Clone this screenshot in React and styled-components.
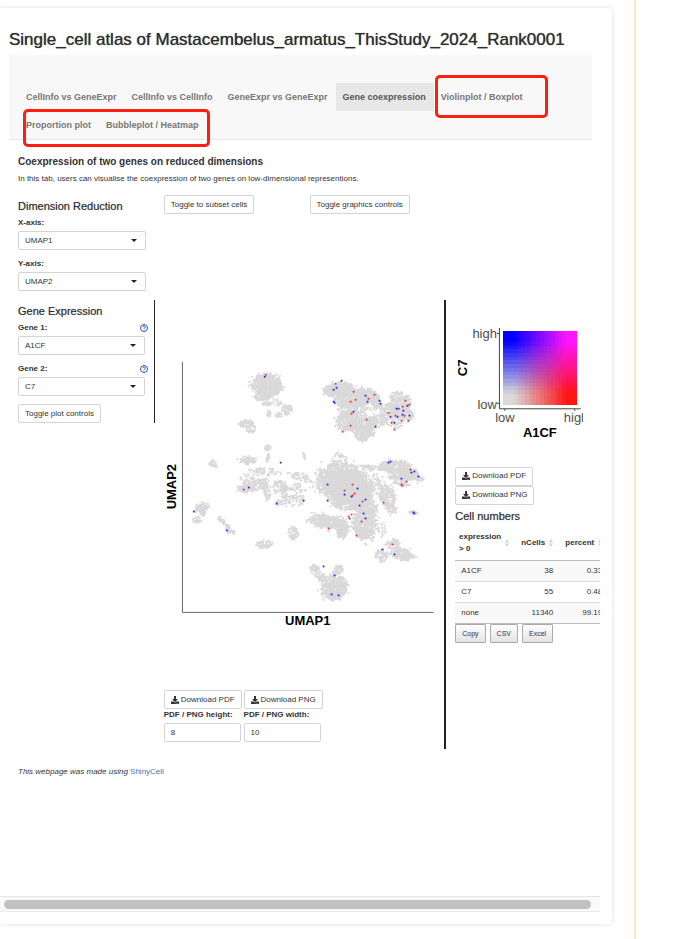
import React from 'react';
import styled, { createGlobalStyle } from "styled-components";
import { FaDownload } from "react-icons/fa";

const tabs = [
    "CellInfo vs GeneExpr",
    "CellInfo vs CellInfo",
    "GeneExpr vs GeneExpr",
    "Gene coexpression",
    "Violinplot / Boxplot",
    "Proportion plot",
    "Bubbleplot / Heatmap",
];

const cellNumbers = [
    { name: "A1CF", nCells: "38", percent: "0.33" },
    { name: "C7", nCells: "55", percent: "0.48" },
    { name: "none", nCells: "11340", percent: "99.19" },
];

// cx, cy, rx, ry, rotation (degrees), density
const clusters = [
    [266, 385, 14, 11, 0, 1.1], [270, 387, 12, 10, 0, 0.8], [262, 397, 8, 4, 0, 0.8], [267, 404, 5, 2, 0, 0.8],
    [287, 410, 6, 5, 20, 0.7], [269, 413, 2, 4, 0, 0.6], [279, 415, 4, 3, 0, 0.5], [277, 403, 5, 3, 0, 0.3],
    [246, 424, 7, 4, 0, 0.8], [251, 429, 5, 4, 0, 0.6], [213, 464, 4, 3, 45, 0.8],
    [268, 448, 3, 3, 0, 0.9], [248, 461, 8, 4, 0, 0.8], [268, 459, 2, 5, 0, 0.5], [265, 472, 15, 4, 0, 0.4],
    [248, 480, 8, 6, 0, 0.3], [247, 489, 9, 4, 0, 0.8], [260, 484, 9, 5, -20, 0.7], [267, 491, 3, 9, -15, 0.8],
    [280, 487, 8, 6, 0, 0.6], [285, 495, 3, 9, 0, 0.6], [280, 503, 4, 3, 0, 0.6],
    [202, 508, 8, 4, -25, 1], [197, 520, 4, 3, -20, 0.8], [203, 513, 3, 3, 0, 0.7],
    [222, 521, 6, 2, 45, 0.8], [228, 529, 2, 5, -10, 0.8], [233, 532, 3, 2, 0, 0.6],
    [264, 545, 8, 4, 0, 0.7], [294, 534, 5, 6, 0, 0.7], [297, 500, 9, 6, 0, 0.4], [305, 457, 1, 5, -20, 0.6],
    [300, 477, 12, 4, 20, 0.4], [298, 489, 8, 5, 0, 0.3],
    // centre
    [340, 472, 20, 9, 0, 0.6], [340, 460, 7, 7, 0, 0.3], [332, 484, 17, 12, 0, 0.9], [348, 487, 22, 17, 0, 1.2],
    [360, 492, 14, 14, 0, 1], [348, 502, 15, 8, 0, 0.8], [327, 522, 18, 7, 8, 0.7], [330, 523, 12, 5, 0, 0.7],
    [343, 529, 6, 10, 0, 0.9], [365, 523, 11, 17, 0, 1.2], [365, 508, 13, 5, 0, 0.6], [382, 530, 4, 6, 0, 0.2],
    [388, 497, 8, 11, -20, 0.7], [392, 509, 5, 5, 0, 0.7], [414, 513, 4, 2, 0, 0.8], [378, 482, 8, 8, 0, 0.2],
    // right wing
    [395, 467, 16, 6, 0, 1.2], [372, 468, 11, 2, 8, 0.8], [410, 474, 10, 6, 25, 1.1], [400, 478, 11, 6, 0, 0.7],
    [419, 478, 5, 4, 0, 0.7], [405, 485, 6, 2, 0, 0.5],
    [393, 545, 6, 5, 0, 0.8], [382, 556, 6, 6, 0, 0.8], [402, 555, 10, 6, 10, 1.1], [411, 557, 5, 2, 0, 0.7],
    // bottom
    [315, 570, 5, 4, 0, 0.8], [321, 577, 6, 4, 40, 0.8], [337, 572, 8, 4, -35, 0.8], [335, 588, 13, 11, 0, 1.2],
    [335, 598, 8, 3, 0, 0.5],
    // upper right
    [341, 388, 13, 6, 0, 1], [330, 391, 6, 5, 0, 1], [349, 396, 19, 8, 10, 1.1], [350, 404, 15, 4, 0, 0.7],
    [368, 397, 12, 8, 20, 0.9], [377, 404, 6, 5, 40, 0.7], [349, 421, 12, 10, 0, 1], [362, 424, 14, 9, 0, 1],
    [364, 433, 10, 6, 0, 0.9], [363, 439, 5, 3, 0, 0.8], [378, 421, 10, 6, 0, 0.8], [390, 412, 8, 9, 0, 0.7],
    [398, 397, 7, 5, 0, 0.7], [407, 402, 4, 7, 0, 0.8], [399, 406, 11, 7, 0, 0.7], [404, 415, 10, 6, 0, 1],
    [395, 425, 7, 4, 0, 0.4], [355, 410, 16, 4, 0, 0.6],
];

const bluePoints = [
    [265, 377], [281, 463], [249, 488], [194, 512], [227, 531], [277, 504], [342, 381], [334, 390], [337, 388],
    [334, 402], [335, 403], [366, 396], [368, 402], [380, 401], [381, 404], [354, 412], [376, 427], [391, 417],
    [397, 409], [399, 409], [408, 406], [404, 411], [403, 415], [398, 417], [410, 416], [395, 423], [389, 463],
    [391, 462], [412, 473], [415, 472], [419, 477], [402, 479], [328, 485], [358, 489], [345, 495], [352, 497],
    [328, 501], [304, 501], [366, 500], [360, 506], [350, 519], [364, 514], [366, 519], [414, 513], [415, 514],
    [383, 550], [395, 555], [324, 567], [335, 576], [332, 595], [339, 596],
];

const redPoints = [
    [266, 375], [244, 490], [336, 384], [354, 392], [356, 400], [351, 402], [369, 399], [375, 395], [352, 414],
    [367, 420], [351, 426], [343, 432], [389, 413], [403, 407], [406, 401], [410, 405], [405, 416], [396, 416],
    [402, 421], [409, 421], [392, 423], [395, 430], [411, 470], [407, 482], [402, 485], [403, 486], [353, 485],
    [345, 491], [355, 494], [353, 496], [363, 502], [352, 515], [349, 517], [362, 522], [329, 529], [357, 536],
    [384, 503], [393, 545],
];

function makeRandom(seed) {
    let s = seed;
    return () => {
        s = (s * 16807) % 2147483647;
        return s / 2147483647;
    };
}

function scatterPath() {
    const random = makeRandom(2024);
    const seen = new Set();
    clusters.forEach(([cx, cy, rx, ry, rotation, density]) => {
        const count = Math.round(Math.PI * rx * ry * density * 0.85) + 6;
        const angle = (rotation * Math.PI) / 180;
        for (let i = 0; i < count; i++) {
            const t = random() * Math.PI * 2;
            // a few cells stray well outside their cluster
            const stray = random() < 0.08 ? 1.3 : 1;
            const r = Math.sqrt(random()) * (0.9 + random() * 0.25) * stray;
            const dx = Math.cos(t) * r * rx;
            const dy = Math.sin(t) * r * ry;
            const x = cx + dx * Math.cos(angle) - dy * Math.sin(angle);
            const y = cy + dx * Math.sin(angle) + dy * Math.cos(angle);
            seen.add(`M${(x - 0.9).toFixed(1)} ${(y - 0.9).toFixed(1)}h1.8v1.8h-1.8z`);
        }
    });
    return [...seen].join("");
}

const greyCells = scatterPath();

const STEPS = 20;

function blend(i, j) {
    const u = Math.min(1, Math.max(0, (i / (STEPS - 1) - 0.12) / 0.76));
    const v = Math.min(1, Math.max(0, (j / (STEPS - 1) - 0.12) / 0.76));
    const corners = [[217, 217, 217], [255, 20, 20], [0, 0, 255], [255, 20, 255]];
    const weights = [(1 - u) * (1 - v), u * (1 - v), (1 - u) * v, u * v];
    const mix = [0, 1, 2].map((c) => Math.round(corners.reduce((sum, k, n) => sum + k[c] * weights[n], 0)));
    return `rgb(${mix.join(",")})`;
}

function UmapPlot() {
    return (
        <Plot viewBox="164 300 272 391" role="img" aria-label="UMAP1 UMAP2">
            <path d={greyCells} fill="#d9d9d9" />
            {redPoints.map(([x, y], i) => (
                <rect key={i} x={x - 1} y={y - 1} width="1.8" height="1.8" fill="#f03030" />
            ))}
            {bluePoints.map(([x, y], i) => (
                <rect key={i} x={x - 1} y={y - 1} width="1.8" height="1.8" fill="#2626f0" />
            ))}
            <path d="M182.5 362V613H434" fill="none" stroke="#666" />
            <AxisTitle x="308" y="626">UMAP1</AxisTitle>
            <AxisTitle transform="translate(176 487) rotate(-90)">UMAP2</AxisTitle>
        </Plot>
    )
}

function Legend() {
    const cells = [];
    const size = 74 / STEPS;
    for (let i = 0; i < STEPS; i++) {
        for (let j = 0; j < STEPS; j++) {
            cells.push(
                <rect key={`${i}-${j}`} x={503 + i * size} y={405 - (j + 1) * size} width={size} height={size} fill={blend(i, j)} />
            );
        }
    }
    return (
        <Plot viewBox="455 300 128 167" role="img" aria-label="A1CF C7">
            <g shapeRendering="crispEdges">{cells}</g>
            <path d="M499.5 328V409H581M497 333.5H499.5M497 403.5H499.5M505 409V411M575 409V411" fill="none" stroke="#444" />
            <TickText x="497" y="338" textAnchor="end">high</TickText>
            <TickText x="497" y="409" textAnchor="end">low</TickText>
            <TickText x="505" y="422" textAnchor="middle">low</TickText>
            <TickText x="564" y="422">high</TickText>
            <AxisTitle x="540" y="437">A1CF</AxisTitle>
            <AxisTitle transform="translate(467 368) rotate(-90)">C7</AxisTitle>
        </Plot>
    )
}

function SelectField({ id, label, value, help }) {
    return (
        <Field>
            <FieldHead>
                <Label htmlFor={id}>{label}</Label>
                {help && (
                    <HelpIcon viewBox="0 0 16 16" aria-hidden="true">
                        <circle cx="8" cy="8" r="7" />
                        <path d="M5.6 6.2a2.4 2.2 0 1 1 3.6 1.9Q8 8.8 8 9.8M8 11v1.6" />
                    </HelpIcon>
                )}
            </FieldHead>
            <SelectBox>
                <Select id={id} defaultValue={value}>
                    <option>{value}</option>
                </Select>
                <Caret viewBox="0 0 6 3" aria-hidden="true"><path d="M0 0H6L3 3Z" /></Caret>
            </SelectBox>
        </Field>
    )
}

function DownloadButton({ children }) {
    return <Button type="button"><FaDownload size={8} />{children}</Button>
}

function App() {
    return (
        <Page>
            <GlobalStyle />
            <Card>
                <Pane>
                    <Content>
                        <Title>Single_cell atlas of Mastacembelus_armatus_ThisStudy_2024_Rank0001</Title>
                        <Navbar>
                            {tabs.map((tab) => (
                                <Tab key={tab} href="#" $active={tab === "Gene coexpression"}>{tab}</Tab>
                            ))}
                            <Marker $left={426} $top={20} $width={113} $height={43} />
                            <Marker $left={14} $top={54} $width={187} $height={38} />
                        </Navbar>
                        <Intro>
                            <Heading>Coexpression of two genes on reduced dimensions</Heading>
                            <p>In this tab, users can visualise the coexpression of two genes on low-dimensional representions.</p>
                        </Intro>
                        <Row>
                            <Column>
                                <SectionTitle>Dimension Reduction</SectionTitle>
                                <SelectField id="x-axis" label="X-axis:" value="UMAP1" />
                                <SelectField id="y-axis" label="Y-axis:" value="UMAP2" />
                            </Column>
                            <Column><Button type="button">Toggle to subset cells</Button></Column>
                            <Column><Button type="button">Toggle graphics controls</Button></Column>
                        </Row>
                        <Row>
                            <Column $rule={1}>
                                <SectionTitle>Gene Expression</SectionTitle>
                                <SelectField id="gene-1" label="Gene 1:" value="A1CF" help />
                                <SelectField id="gene-2" label="Gene 2:" value="C7" help />
                                <Button type="button">Toggle plot controls</Button>
                            </Column>
                            <Column $span={2} $rule={2}>
                                <UmapPlot />
                                <Exports>
                                    <DownloadButton>Download PDF</DownloadButton>
                                    <DownloadButton>Download PNG</DownloadButton>
                                    <SizeField>
                                        <Label htmlFor="height">PDF / PNG height:</Label>
                                        <Input id="height" defaultValue="8" />
                                    </SizeField>
                                    <SizeField>
                                        <Label htmlFor="width">PDF / PNG width:</Label>
                                        <Input id="width" defaultValue="10" />
                                    </SizeField>
                                </Exports>
                            </Column>
                            <Column>
                                <Legend />
                                <Stack>
                                    <DownloadButton>Download PDF</DownloadButton>
                                    <DownloadButton>Download PNG</DownloadButton>
                                </Stack>
                                <SectionTitle>Cell numbers</SectionTitle>
                                <Table>
                                    <thead>
                                        <tr>
                                            {["expression > 0", "nCells", "percent"].map((name) => (
                                                <th key={name}>
                                                    <HeadCell>
                                                        <span>{name}</span>
                                                        <SortIcon viewBox="0 0 4 8" aria-hidden="true">
                                                            <path d="M0 3.5L2 0L4 3.5ZM0 4.5L2 8L4 4.5Z" />
                                                        </SortIcon>
                                                    </HeadCell>
                                                </th>
                                            ))}
                                        </tr>
                                    </thead>
                                    <tbody>
                                        {cellNumbers.map((row) => (
                                            <tr key={row.name}>
                                                <td>{row.name}</td>
                                                <td>{row.nCells}</td>
                                                <td>{row.percent}</td>
                                            </tr>
                                        ))}
                                    </tbody>
                                </Table>
                                <TableButtons>
                                    <TableButton type="button">Copy</TableButton>
                                    <TableButton type="button">CSV</TableButton>
                                    <TableButton type="button">Excel</TableButton>
                                </TableButtons>
                            </Column>
                        </Row>
                        <Footer><em>This webpage was made using</em> <a href="#">ShinyCell</a></Footer>
                    </Content>
                </Pane>
                <ScrollTrack><ScrollThumb /></ScrollTrack>
            </Card>
            <SideRule />
        </Page>
    )
}

const GlobalStyle = createGlobalStyle`
* {
    box-sizing: border-box;
}

body {
    margin: 0;
    background: #fff;
    color: #333;
    font-family: "Liberation Sans", Arial, sans-serif;
    font-size: 8px;
    line-height: 12px;
}

h1, h2, h3, p {
    margin: 0;
}

button, input, select {
    font: inherit;
    color: inherit;
}
`

const Page = styled.div`
    display: flex;
    min-height: 100vh;
`

const Card = styled.main`
    display: flex;
    flex-direction: column;
    flex: 1;
    min-width: 0;
    margin: 8px 22px 15px 0;
    padding: 0 12px 12px 0;
    border-radius: 0 3px 3px 0;
    box-shadow: 0 0 5px #dcdfe8;
`

const SideRule = styled.div`
    width: 48px;
    border-left: 2px solid #fbe8c0;
`

const Pane = styled.div`
    flex: 1;
    overflow: hidden;
`

const Content = styled.div`
    margin: 0 8px 0 9px;
`

const Title = styled.h1`
    padding: 21px 0 4px;
    color: #2d2d2d;
    font-size: 17px;
    font-weight: 500;
    line-height: 22px;
    text-shadow: 0 0 1px #555;
    white-space: nowrap;
`

const Navbar = styled.nav`
    position: relative;
    display: flex;
    flex-wrap: wrap;
    padding: 28px 9px 0 10px;
    border-bottom: 1px solid #e7e7e7;
    background: #f8f8f8;
`

const Tab = styled.a`
    padding: 0 8px 0 7px;
    background: ${(props) => (props.$active ? "#e7e7e7" : "transparent")};
    color: ${(props) => (props.$active ? "#555" : "#777")};
    font-size: 9px;
    font-weight: bold;
    line-height: 28px;
    text-decoration: none;
`

// Hand-drawn style frame laid over the tabs it points out.
const Marker = styled.div`
    position: absolute;
    left: ${(props) => props.$left}px;
    top: ${(props) => props.$top}px;
    width: ${(props) => props.$width}px;
    height: ${(props) => props.$height}px;
    border: 3px solid #fc2010;
    border-radius: 5px;
    pointer-events: none;
`

const Intro = styled.header`
    padding: 16px 9px 10px;

    p {
        margin-top: 5px;
    }
`

const Heading = styled.h2`
    color: #333;
    font-size: 10px;
    font-weight: bold;
`

const SectionTitle = styled.h3`
    color: #2d2d2d;
    font-size: 11px;
    font-weight: 500;
    line-height: 22px;
    text-shadow: 0 0 1px #999;
`

const Row = styled.div`
    display: grid;
    grid-template-columns: repeat(4, minmax(0, 1fr));
    align-items: start;
    margin-bottom: 1px;
`

const Column = styled.section`
    grid-column: span ${(props) => props.$span || 1};
    padding: 0 9px;
    border-right: ${(props) => props.$rule || 0}px solid #222;
`

const Field = styled.div`
    margin-bottom: 8px;
`

const FieldHead = styled.div`
    display: flex;
    align-items: center;
    justify-content: space-between;
    margin-bottom: 2px;
`

const Label = styled.label`
    font-weight: bold;
    white-space: nowrap;
`

const HelpIcon = styled.svg`
    width: 8px;
    height: 8px;
    margin-right: -3px;
    fill: none;
    stroke: #2c5cae;
    stroke-width: 2;
`

const SelectBox = styled.div`
    display: grid;
    align-items: center;
`

const Select = styled.select`
    grid-area: 1 / 1;
    width: 100%;
    height: 19px;
    padding: 0 6px;
    border: 1px solid #d4d4d4;
    border-radius: 2px;
    background: #fff;
    appearance: none;
`

const Caret = styled.svg`
    grid-area: 1 / 1;
    justify-self: end;
    width: 6px;
    height: 3px;
    margin-right: 9px;
    fill: #222;
    pointer-events: none;
`

const Button = styled.button`
    display: inline-flex;
    align-items: center;
    gap: 2px;
    height: 19px;
    padding: 0 6px;
    border: 1px solid #d4d4d4;
    border-radius: 2px;
    background: #fff;
    white-space: nowrap;
`

const Plot = styled.svg`
    display: block;
    width: 100%;
    height: auto;
`

const AxisTitle = styled.text`
    fill: #000;
    font-size: 13px;
    font-weight: bold;
    text-anchor: middle;
`

const TickText = styled.text`
    fill: #4d4d4d;
    font-size: 13px;
`

const Exports = styled.div`
    display: grid;
    grid-template-columns: max-content max-content;
    justify-items: start;
    column-gap: 2px;
    padding-bottom: 7px;
`

const SizeField = styled.div`
    display: flex;
    flex-direction: column;
    gap: 2px;
`

const Input = styled.input`
    width: 77px;
    height: 19px;
    padding: 0 6px;
    border: 1px solid #d4d4d4;
    border-radius: 2px;
`

const Stack = styled.div`
    display: flex;
    flex-direction: column;
    align-items: flex-start;
`

const Table = styled.table`
    width: 153px;
    border-bottom: 1px solid #bbb;
    border-collapse: collapse;
    table-layout: fixed;

    th {
        height: 34px;
        padding: 0 6px;
        border-bottom: 1px solid #bbb;
        text-align: left;
    }

    th:first-child {
        width: 60px;
    }

    th:nth-child(2) {
        width: 44px;
    }

    td {
        height: 21px;
        padding: 0 6px;
        border-top: 1px solid #ddd;
        text-align: right;
    }

    td:first-child {
        text-align: left;
    }

    tbody tr:nth-child(odd) {
        background: #f9f9f9;
    }
`

const HeadCell = styled.div`
    display: flex;
    align-items: center;
    justify-content: flex-end;
    gap: 4px;
`

const SortIcon = styled.svg`
    flex: none;
    width: 4px;
    height: 8px;
    fill: #d3d3d3;
`

const TableButtons = styled.div`
    display: flex;
    gap: 4px;
`

const TableButton = styled.button`
    height: 19px;
    padding: 0 6px;
    border: 1px solid #aaa;
    border-radius: 1px;
    background: linear-gradient(#fff, #e2e2e2);
    font-size: 7px;
`

const Footer = styled.footer`
    padding: 16px 9px;

    a {
        color: #337ab7;
        text-decoration: none;
    }
`

const ScrollTrack = styled.div`
    padding: 3px 9px 2px 4px;
    border-top: 1px solid #e4e4e4;
    border-bottom: 1px solid #ececec;
    background: #fafafa;
`

const ScrollThumb = styled.div`
    height: 9px;
    border-radius: 5px;
    background: #c1c1c1;
`

export default App
